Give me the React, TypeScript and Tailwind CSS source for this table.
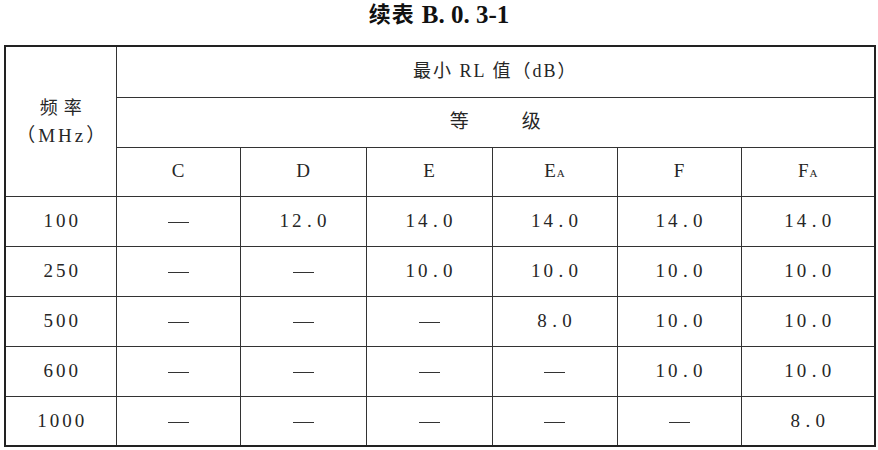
import React from 'react'

const serif = "font-['Liberation_Serif','Noto_Sans_CJK_SC',serif]"

const grades = ['C', 'D', 'E', 'EA', 'F', 'FA']

const rows: { freq: string; values: (string | null)[] }[] = [
  { freq: '100', values: [null, '12.0', '14.0', '14.0', '14.0', '14.0'] },
  { freq: '250', values: [null, null, '10.0', '10.0', '10.0', '10.0'] },
  { freq: '500', values: [null, null, null, '8.0', '10.0', '10.0'] },
  { freq: '600', values: [null, null, null, null, '10.0', '10.0'] },
  { freq: '1000', values: [null, null, null, null, null, '8.0'] },
]

// digits set on a fixed pitch, like the typeset original
function Num({ value }: { value: string }) {
  return (
    <span className="inline-flex">
      {value.split('').map((ch, i) => (
        <span key={i} className="inline-block w-[12.5px] text-center">
          {ch}
        </span>
      ))}
    </span>
  )
}

function Grade({ g }: { g: string }) {
  if (g.length === 1) return <span>{g}</span>
  return (
    <span>
      {g[0]}
      <span className="text-[11px] ml-[1px]">{g[1]}</span>
    </span>
  )
}

const Dash = () => <span className="inline-block w-[21px] h-px bg-[#333] align-middle" />

export default function App() {
  return (
    <div className={`w-[878px] h-[450px] bg-white text-[#262626] ${serif}`}>
      <div className="h-[45px] flex items-start justify-center pt-[1px] font-bold text-[#111] leading-[28px]">
        <span className="text-[22px] tracking-[1px]">续表</span>
        <span className="text-[25px] ml-[7px]">B. 0. 3-1</span>
      </div>
      <div className="pl-[4px]">
        <table className="w-[870px] border-collapse border-2 border-[#222] text-[19px] table-fixed">
          <colgroup>
            <col className="w-[111px]" />
            <col className="w-[124px]" />
            <col className="w-[126px]" />
            <col className="w-[126px]" />
            <col className="w-[125px]" />
            <col className="w-[124px]" />
            <col className="w-[134px]" />
          </colgroup>
          <thead>
            <tr className="h-[51px]">
              <td rowSpan={3} className="border border-[#333] text-center text-[18px] leading-[27px] pt-[1px]">
                <div className="tracking-[6px] pl-[6px]">频率</div>
                <div className="text-[19px] tracking-[3px] pl-[3px]">（MHz）</div>
              </td>
              <td colSpan={6} className="border border-[#333] text-center text-[18px] tracking-[2px]">
                最小 RL 值（dB）
              </td>
            </tr>
            <tr className="h-[50px]">
              <td colSpan={6} className="border border-[#333] text-center text-[19px]">
                <span className="tracking-[53px] pl-[53px]">等级</span>
              </td>
            </tr>
            <tr className="h-[49px]">
              {grades.map((g) => (
                <td key={g} className="border border-[#333] text-center">
                  <Grade g={g} />
                </td>
              ))}
            </tr>
          </thead>
          <tbody>
            {rows.map((r) => (
              <tr key={r.freq} className="h-[50px]">
                <td className="border border-[#333] text-center">
                  <Num value={r.freq} />
                </td>
                {r.values.map((v, i) => (
                  <td key={i} className="border border-[#333] text-center">
                    {v ? <Num value={v} /> : <Dash />}
                  </td>
                ))}
              </tr>
            ))}
          </tbody>
        </table>
      </div>
    </div>
  )
}
